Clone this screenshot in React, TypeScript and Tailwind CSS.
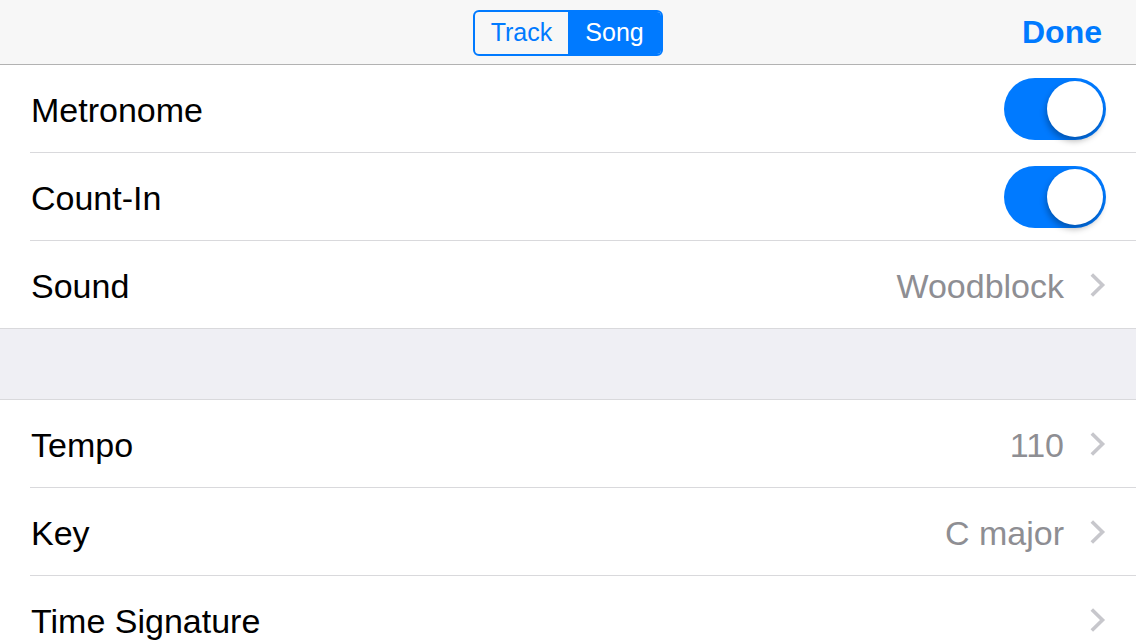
import React from "react";

const Chevron = () => (
  <svg width="17" height="26" viewBox="0 0 17 26" className="shrink-0">
    <path d="M2.8 2.5 L13.5 13 L2.8 23.5" fill="none" stroke="#c7c7cc" strokeWidth="3.6" strokeLinecap="butt" strokeLinejoin="miter" />
  </svg>
);

const Toggle = () => (
  <div className="relative h-[62px] w-[102px] rounded-full bg-[#007aff]">
    <div className="absolute right-[3px] top-[3px] h-[56px] w-[56px] rounded-full bg-white shadow-[-1px_4px_6px_rgba(0,0,0,0.3)]" />
  </div>
);

const Row = ({ label, children, last }: { label: string; children?: React.ReactNode; last?: boolean }) => (
  <div className="flex flex-col">
    <div className="flex h-[87px] items-center justify-between pl-[31px] pr-[30px]">
      <span className="pt-[3px] text-[34px] text-black">{label}</span>
      <div className="flex items-center">{children}</div>
    </div>
    {!last && <div className="ml-[30px] h-px bg-[#d9d9dc]" />}
  </div>
);

const Value = ({ text }: { text?: string }) => (
  <>
    {text && <span className="mr-[25px] pt-[3px] text-[34px] text-[#8e8e93]">{text}</span>}
    <Chevron />
  </>
);

export default function App() {
  return (
    <div
      className="h-[640px] w-[1136px] overflow-hidden bg-white"
      style={{ fontFamily: '"Liberation Sans", Arial, sans-serif' }}
    >
      <div className="relative flex h-[65px] items-center justify-center border-b border-[#b2b2b2] bg-[#f7f7f7]">
        <div className="mt-px flex h-[46px] w-[190px] overflow-hidden rounded-[6px] border-2 border-[#007aff]">
          <div className="flex flex-1 items-center justify-center text-[25px] text-[#007aff]">Track</div>
          <div className="flex flex-1 items-center justify-center bg-[#007aff] text-[25px] text-white">Song</div>
        </div>
        <span className="absolute right-[34px] top-[8px] text-[32px] font-bold text-[#007aff]">Done</span>
      </div>
      <div className="flex flex-col">
        <Row label="Metronome">
          <Toggle />
        </Row>
        <Row label="Count-In">
          <Toggle />
        </Row>
        <Row label="Sound" last>
          <Value text="Woodblock" />
        </Row>
      </div>
      <div className="h-[72px] border-y border-[#d9d9dc] bg-[#efeff4]" />
      <div className="flex flex-col">
        <Row label="Tempo">
          <Value text="110" />
        </Row>
        <Row label="Key">
          <Value text="C major" />
        </Row>
        <Row label="Time Signature" last>
          <Value />
        </Row>
      </div>
    </div>
  );
}
